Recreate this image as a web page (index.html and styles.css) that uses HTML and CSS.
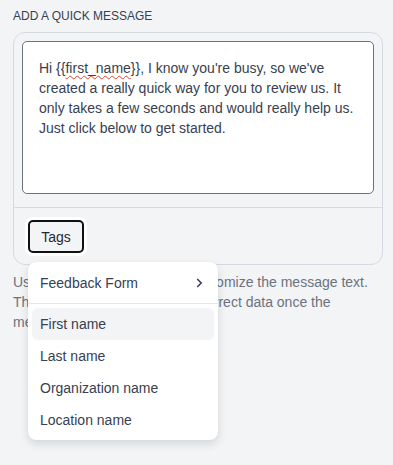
FILE: index.html
```html
<!DOCTYPE html>
<html>
<head>
  <title>Quick Message</title>
  <link rel="stylesheet" href="styles.css">
</head>
<body>
  <div class="field">
    <div class="field-label">Add a quick message</div>

    <div class="composer">
      <div class="composer-body">
        <div class="message-box">Hi {{<span class="misspelled">first_name</span>}}, I know you're busy, so we've created a really quick way for you to review us. It only takes a few seconds and would really help us. Just click below to get started.</div>
      </div>
      <div class="composer-footer">
        <div class="tags-wrap">
          <button class="tags-btn" type="button">Tags</button>

          <!-- Tags menu -->
          <div class="tags-menu">
            <div class="menu-item submenu">
              <span>Feedback Form</span>
              <svg class="chevron" viewBox="0 0 16 16">
                <path d="M6 3.5L10.5 8 6 12.5"/>
              </svg>
            </div>
            <div class="menu-list">
              <div class="menu-item active">First name</div>
              <div class="menu-item">Last name</div>
              <div class="menu-item">Organization name</div>
              <div class="menu-item">Location name</div>
            </div>
          </div>
        </div>
      </div>
    </div>

    <p class="field-help">Use tags to personalize and customize the message text. The tags are swapped for the correct data once the message is sent.</p>
  </div>
</body>
</html>
```

FILE: styles.css
```css
html, body {
  min-height: 100vh;
}

body {
  margin: 0;
  padding: 0 10px 0 13px;
  background: #f3f4f6;
  font-family: 'Liberation Sans', Arial, sans-serif;
  color: #374151;
}

.field {
  padding-top: 9px;
}

.field-label {
  font-size: 12px;
  line-height: 14px;
  text-transform: uppercase;
  color: #374151;
  margin-bottom: 9px;
}

/* Composer */
.composer {
  border: 1px solid #d6dbe3;
  border-radius: 12px;
  background: #f3f4f6;
}

.composer-body {
  padding: 8px 8px 13px 8px;
  border-bottom: 1px solid #d6dbe3;
}

.message-box {
  height: 119px;
  padding: 16px;
  background: #fff;
  border: 1px solid #6b7280;
  border-radius: 5px;
  font-size: 14px;
  line-height: 20px;
  color: #374151;
}

.misspelled {
  text-decoration: underline wavy #e0442c;
  text-decoration-thickness: 1px;
  text-underline-offset: 2px;
}

.composer-footer {
  padding: 9px 11px 8px 11px;
}

.tags-wrap {
  position: relative;
  display: inline-block;
}

.tags-btn {
  display: block;
  box-sizing: border-box;
  width: 56px;
  height: 33px;
  background: #f3f4f6;
  border: 2px solid #111;
  border-radius: 5px;
  box-shadow: 0 0 0 3px #fff;
  font-family: inherit;
  font-size: 14px;
  color: #1f2937;
  padding: 0;
  margin: 3px;
}

/* Menu */
.tags-menu {
  position: absolute;
  top: 45px;
  left: 3px;
  width: 190px;
  background: #fff;
  border-radius: 8px;
  box-shadow: 0 4px 10px rgba(0,0,0,0.12), 0 0 1px rgba(0,0,0,0.1);
  z-index: 10;
}

.menu-item {
  display: flex;
  align-items: center;
  justify-content: space-between;
  height: 32px;
  padding: 0 8px;
  border-radius: 6px;
  font-size: 14px;
  color: #374151;
}

.menu-item.submenu {
  height: 41px;
  padding: 0 12px;
  border-bottom: 1px solid #e5e7eb;
  border-radius: 8px 8px 0 0;
}

.menu-item.active {
  background: #f3f4f6;
}

.chevron {
  width: 14px;
  height: 14px;
  fill: none;
  stroke: #374151;
  stroke-width: 1.8;
}

.menu-list {
  padding: 4px;
}

.field-help {
  margin: 7px 0 0;
  font-size: 14px;
  line-height: 20px;
  color: #6b7280;
}
```
